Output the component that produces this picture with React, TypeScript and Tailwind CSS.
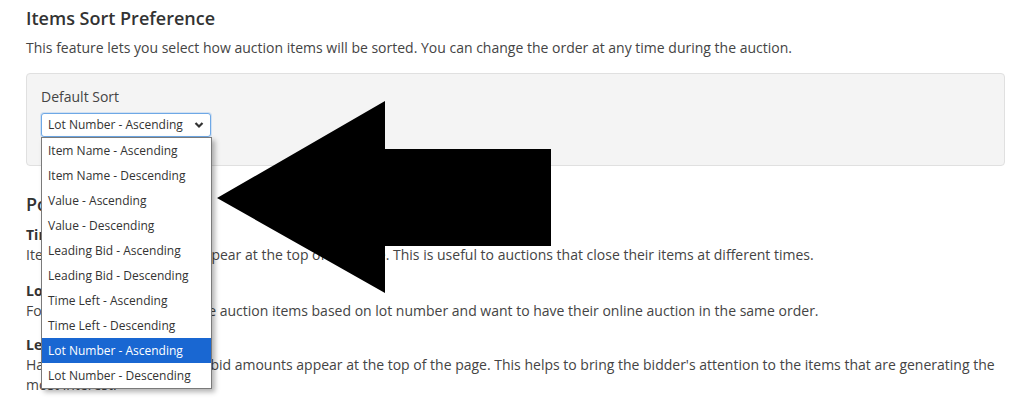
import React from "react";

const options = [
  "Item Name - Ascending",
  "Item Name - Descending",
  "Value - Ascending",
  "Value - Descending",
  "Leading Bid - Ascending",
  "Leading Bid - Descending",
  "Time Left - Ascending",
  "Time Left - Descending",
  "Lot Number - Ascending",
  "Lot Number - Descending",
];

export default function App() {
  return (
    <div
      className="relative w-[1017px] h-[403px] overflow-hidden bg-white text-[#333]"
      style={{ fontFamily: '"Open Sans", "Liberation Sans", sans-serif' }}
    >
      <div className="pl-[26px] w-[1005px]">
        <h2 className="pt-[6px] text-[18px] leading-[24px] font-semibold text-[#333]">
          Items Sort Preference
        </h2>
        <p className="mt-[7px] text-[14px] leading-[21px] text-[#444]">
          This feature lets you select how auction items will be sorted. You can change the order at any time during the auction.
        </p>
        <div className="mt-[15px] h-[93px] rounded-[4px] border border-[#e0e0e0] bg-[#f4f4f4] px-[14px] pt-[13px]">
          <div className="text-[14px] leading-[20px] text-[#444]">Default Sort</div>
          <div className="relative mt-[6px] flex h-[24px] w-[170px] items-center justify-between rounded-[3px] border border-[#6ea8e6] bg-white pl-[6px] pr-[5px] shadow-[0_0_0_1px_rgba(110,168,230,0.25)]">
            <span className="text-[12px] leading-[16px] text-[#333]">Lot Number - Ascending</span>
            <svg width="10" height="8" viewBox="0 0 10 8" className="mr-[1px]">
              <path d="M1.5 2 L5 5.5 L8.5 2" fill="none" stroke="#333" strokeWidth="2.2" />
            </svg>
          </div>
        </div>
        <h3 className="mt-[26px] text-[18px] leading-[24px] font-semibold text-[#333]">
          Popular Sort Options
        </h3>
        <div className="mt-[9px] text-[14px] leading-[20px] text-[#444]">
          <div className="font-bold text-[#333]">Time Left</div>
          <div>Items closing soonest will appear at the top of the page. This is useful to auctions that close their items at different times.</div>
          <div className="mt-[16px] font-bold text-[#333]">Lot Number</div>
          <div>For auctions that arrange the auction items based on lot number and want to have their online auction in the same order.</div>
          <div className="mt-[14px] font-bold text-[#333]">Leading Bid</div>
          <div>Have items with the highest bid amounts appear at the top of the page. This helps to bring the bidder's attention to the items that are generating the most interest.</div>
        </div>
      </div>

      {/* open dropdown list */}
      <div className="absolute left-[41px] top-[137px] w-[171px] border border-[#7a7a7a] bg-white shadow-[3px_3px_5px_rgba(0,0,0,0.3)]">
        {options.map((o) => (
          <div
            key={o}
            className={
              o === "Lot Number - Ascending"
                ? "h-[25px] pl-[6px] text-[12px] leading-[25px] bg-[#1967d2] text-white"
                : "h-[25px] pl-[6px] text-[12px] leading-[25px] text-[#333]"
            }
          >
            {o}
          </div>
        ))}
      </div>

      {/* arrow */}
      <svg
        className="absolute left-0 top-0 pointer-events-none"
        width="1017"
        height="403"
        viewBox="0 0 1017 403"
      >
        <polygon
          points="217,198 385,101 385,149 551,149 551,246 385,246 385,293"
          fill="#000"
        />
      </svg>
    </div>
  );
}
